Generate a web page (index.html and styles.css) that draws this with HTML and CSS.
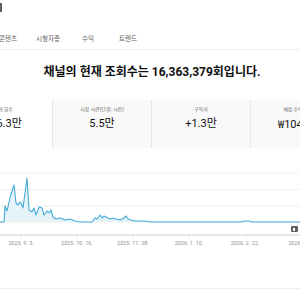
FILE: index.html
```html
<!DOCTYPE html>
<html lang="ko">
<head>
    <meta charset="UTF-8">
    <meta name="viewport" content="width=device-width, initial-scale=1.0">
    <title>채널 분석</title>
    <link rel="stylesheet" href="styles.css">
</head>
<body>
    <div class="page">
        <div class="topbar"><span class="mark"></span></div>
        <nav class="tabs">
            <span class="tab">콘텐츠</span>
            <span class="tab">시청자층</span>
            <span class="tab">수익</span>
            <span class="tab">트렌드</span>
        </nav>
        <h1 class="headline">채널의 현재 조회수는 16,363,379회입니다.</h1>
        <div class="cards">
            <div class="card card-active">
                <div class="card-label">조회수</div>
                <div class="card-value">26.3만</div>
            </div>
            <div class="card">
                <div class="card-label">시청 시간(단위: 시간)</div>
                <div class="card-value">5.5만</div>
            </div>
            <div class="card">
                <div class="card-label">구독자</div>
                <div class="card-value">+1.3만</div>
            </div>
            <div class="card">
                <div class="card-label">예상 수익(KRW)</div>
                <div class="card-value"><span class="won">₩</span>104.8만</div>
            </div>
        </div>
        <div class="chart">
            <svg class="plot" width="300" height="86" viewBox="0 0 300 86">
                <g stroke="#ececec" stroke-width="0.8">
                    <line x1="0" y1="20" x2="300" y2="20"/>
                    <line x1="0" y1="36.5" x2="300" y2="36.5"/>
                    <line x1="0" y1="53" x2="300" y2="53"/>
                    <line x1="0" y1="69" x2="300" y2="69"/>
                </g>
                <path fill="#e6f3f9" d="M0 69 L4 69 L5 53 L7 58 L10 45 L12 38 L14 32 L16 50 L18 52 L20 49 L21 50 L23 55 L25 40 L27 25 L29 57 L32 59 L34 55 L36 62 L38 57 L39 54 L42 55 L44 62 L47 58 L49 60 L51 57 L53 64 L56 66 L60 65 L65 67 L70 66 L75 68 L80 69 Z"/>
                <path fill="#e6f3f9" d="M92 69 L95 65 L97 66 L100 62 L102 65 L104 63 L106 64 L110 66 L113 65 L116 66 L120 67 L124 65 L126 63 L128 66 L131 67 L135 68 L145 68 L150 69 Z"/>
                <path fill="none" stroke="#45abd7" stroke-width="1.1" stroke-linejoin="round" d="M0 69 L4 69 L5 53 L7 58 L10 45 L12 38 L14 32 L16 50 L18 52 L20 49 L21 50 L23 55 L25 40 L27 25 L29 57 L32 59 L34 55 L36 62 L38 57 L39 54 L42 55 L44 62 L47 58 L49 60 L51 57 L53 64 L56 66 L60 65 L65 67 L70 66 L75 68 L80 69 L92 69 L95 65 L97 66 L100 62 L102 65 L104 63 L106 64 L110 66 L113 65 L116 66 L120 67 L124 65 L126 63 L128 66 L131 67 L135 68 L145 68 L150 69 L240 69 L245 68 L249 68 L252 69 L300 69"/>
                <line x1="0" y1="82" x2="300" y2="82" stroke="#d0d0d0" stroke-width="1"/>
                <g stroke="#dedede" stroke-width="0.8">
                    <line x1="21" y1="82" x2="21" y2="86"/>
                    <line x1="77" y1="82" x2="77" y2="86"/>
                    <line x1="133" y1="82" x2="133" y2="86"/>
                    <line x1="189" y1="82" x2="189" y2="86"/>
                    <line x1="246" y1="82" x2="246" y2="86"/>
                </g>
            </svg>
            <span class="chart-btn"><span class="chart-btn-dot"></span></span>
            <div class="axis">
                <span class="axis-label">2025. 9. 3.</span>
                <span class="axis-label">2025. 10. 16.</span>
                <span class="axis-label">2025. 11. 28.</span>
                <span class="axis-label">2026. 1. 10.</span>
                <span class="axis-label">2026. 2. 22.</span>
                <span class="axis-label">2026. 4. 6.</span>
            </div>
        </div>
        <div class="footer-line"></div>
    </div>
</body>
</html>
```
FILE: styles.css
```css
html, body {
    margin: 0;
    padding: 0;
    overflow: hidden;
    background-color: #fff;
}
body {
    font-family: Roboto, "Noto Sans CJK KR", sans-serif;
    color: #0f0f0f;
}
.page {
    width: 300px;
}
.topbar {
    height: 23px;
}
.mark {
    display: block;
    width: 1.5px;
    height: 9px;
    margin-top: 3px;
    background-color: #606060;
}
.tabs {
    display: flex;
    align-items: center;
    height: 23px;
    margin-left: -12px;
    border-bottom: 1px solid #ececec;
}
.tab {
    width: 40px;
    text-align: center;
    font-size: 6.5px;
    color: #606060;
    white-space: nowrap;
}
.headline {
    margin: 0;
    padding: 14px 0 0 4px;
    height: 36px;
    line-height: 16px;
    font-size: 12px;
    font-weight: 700;
    text-align: center;
    white-space: nowrap;
}
.cards {
    display: grid;
    grid-template-columns: 92px 99px 99px 99px;
    height: 48px;
    margin-left: -40px;
}
.card {
    background-color: #f9f9f9;
    border-left: 1px solid #e8e8e8;
    padding-top: 6px;
    text-align: center;
    white-space: nowrap;
}
.card-active {
    background-color: #fff;
    border-left: none;
}
.card-label {
    font-size: 5px;
    line-height: 7px;
    color: #606060;
}
.card-value {
    margin-top: 3.5px;
    font-size: 11px;
    line-height: 13px;
}
.won {
    font-family: "Noto Sans CJK KR", sans-serif;
}
.chart {
    position: relative;
    margin-top: 5px;
}
.plot {
    display: block;
}
.chart-btn {
    position: absolute;
    top: 73px;
    left: 291px;
    width: 6.5px;
    height: 6px;
    border-radius: 1px;
    background-color: #606060;
    display: flex;
    align-items: center;
    justify-content: center;
}
.chart-btn-dot {
    width: 2px;
    height: 3px;
    background-color: #fff;
}
.axis {
    display: flex;
    height: 8px;
    margin-left: -7px;
}
.axis-label {
    flex: 0 0 56px;
    text-align: center;
    font-size: 5.5px;
    line-height: 8px;
    color: #909090;
    white-space: nowrap;
}
.footer-line {
    margin-top: 41px;
    border-top: 1px solid #eeeeee;
}
```
